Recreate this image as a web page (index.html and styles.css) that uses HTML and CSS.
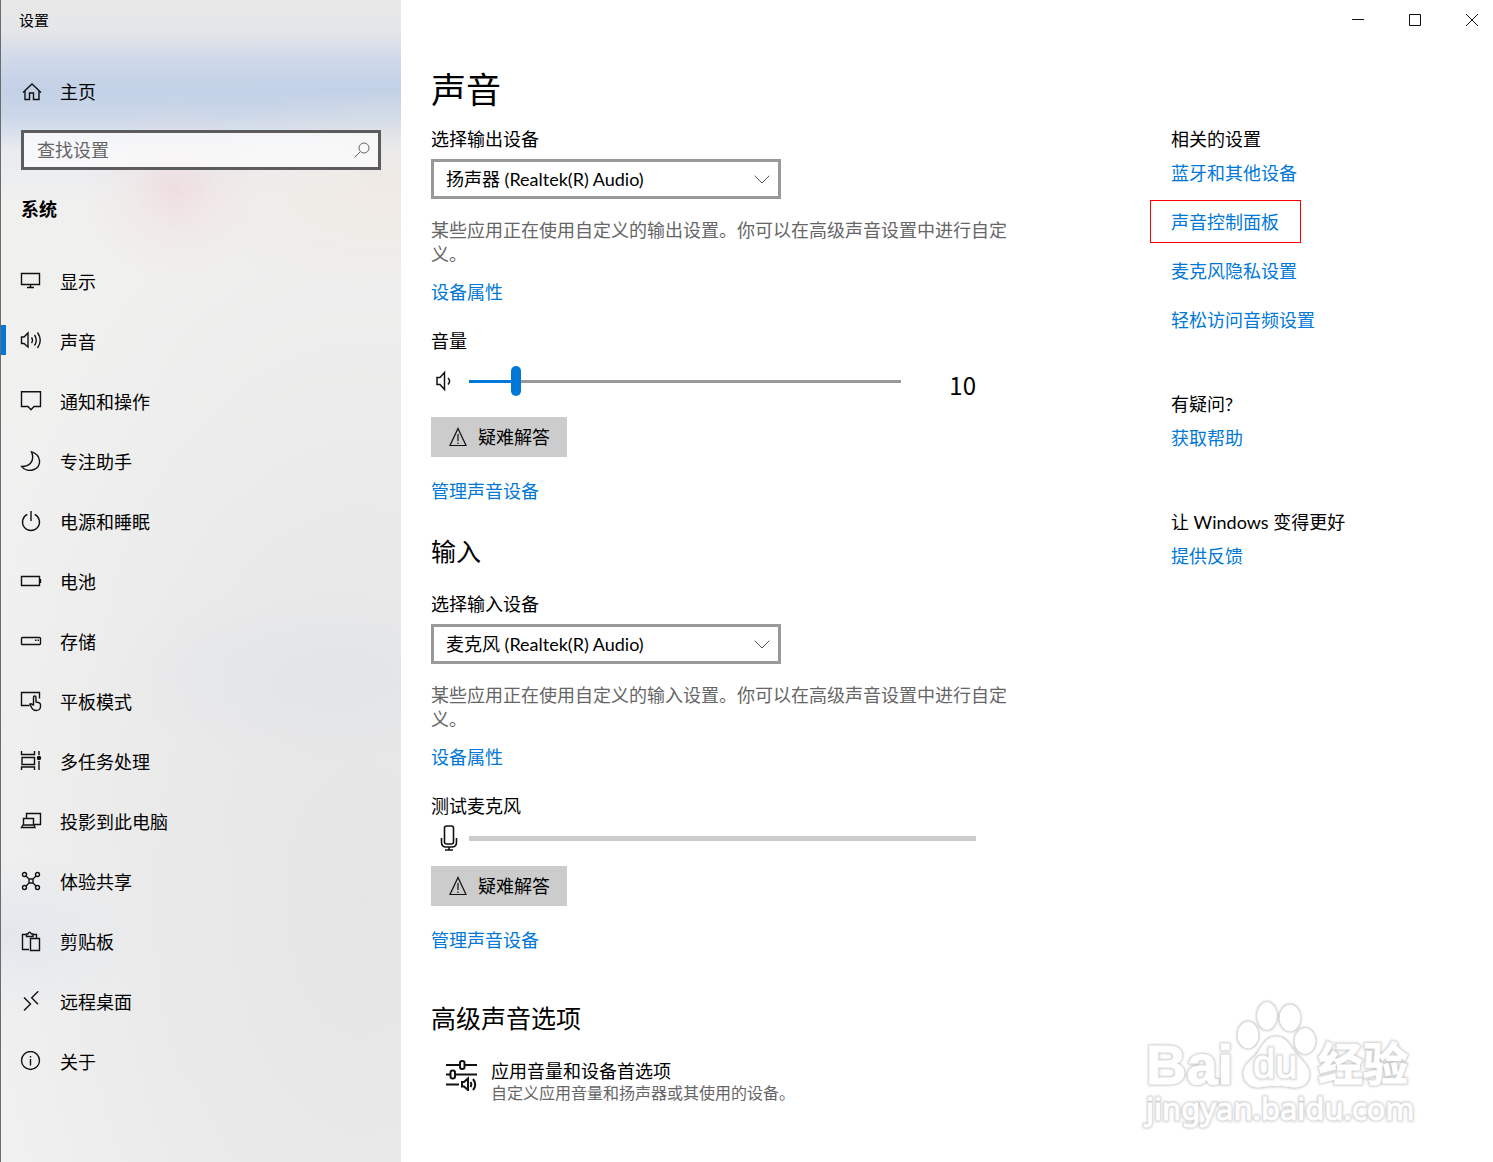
FILE: index.html
```html
<!DOCTYPE html>
<html lang="zh-CN">
<head>
<meta charset="utf-8">
<title>设置</title>
<link rel="stylesheet" href="styles.css">
</head>
<body>
<div class="window">
  <aside class="sidebar">
    <div class="app-name">设置</div>
    <a class="nav-link home" href="#">
      <svg class="icon" viewBox="0 0 22 22"><path d="M3 11.500 12 3l9 8.500M5 10v8.500h4.500v-6.500h4v6.500H19V10"/></svg>
      <span>主页</span>
    </a>
    <label class="search">
      <input type="text" placeholder="查找设置" aria-label="查找设置">
      <svg class="search-icon" viewBox="0 0 16 16"><circle cx="10" cy="6" r="5"/><path d="M6.500 9.500.5 15.500"/></svg>
    </label>
    <h2 class="group-name">系统</h2>
    <nav class="nav">
      <a class="nav-link" href="#"><svg class="icon" viewBox="0 0 22 22"><path d="M1.500 2.500h18v11h-18zM10.500 13.500v2.500M7 16.500h7"/></svg><span>显示</span></a>
      <a class="nav-link active" href="#"><svg class="icon" viewBox="0 0 22 22"><path d="M1.500 6v6.500h2.500l4 3.500V2L4 6zM11.500 6.500q2 2.700 0 5.500M14.500 4q3.600 5.200 0 10.500M17.500 1.500q5.500 7.800 0 15.500"/></svg><span>声音</span></a>
      <a class="nav-link" href="#"><svg class="icon" viewBox="0 0 22 22"><path d="M1.500.8h19v14.700H14l-3 3.200-3-3.200H1.500z"/></svg><span>通知和操作</span></a>
      <a class="nav-link" href="#"><svg class="icon" viewBox="0 0 22 22"><path d="M11.500.8c10 3 10.500 14.500 2.500 17.700-4.500 1.800-9.500.8-12.300-3C8.500 15.500 15.500 11 11.500.8z"/></svg><span>专注助手</span></a>
      <a class="nav-link" href="#"><svg class="icon" viewBox="0 0 22 22"><path d="M11 0v10M7.300 3.400a8.500 8.500 0 1 0 7.400 0"/></svg><span>电源和睡眠</span></a>
      <a class="nav-link" href="#"><svg class="icon" viewBox="0 0 22 22"><path d="M1.500 5.500h18v9h-18z"/><path d="M20.500 8v4"/></svg><span>电池</span></a>
      <a class="nav-link" href="#"><svg class="icon" viewBox="0 0 22 22"><rect x="1.500" y="6.500" width="19" height="7" rx="1"/><path d="M15 9.300h1.500M17.500 9.300H19"/></svg><span>存储</span></a>
      <a class="nav-link" href="#"><svg class="icon" viewBox="0 0 22 22"><path d="M9.500 14.500h-8v-13h18v6M13.500 14.500V6.500q0-1.500 1.200-1.500T16 6.500V11l3 .7q1.500.4 1.500 2V16q-.5 3.500-4.500 3.500-3 0-4.500-3l-1.500-3.500q1.500-.8 3.500 1.500"/></svg><span>平板模式</span></a>
      <a class="nav-link" href="#"><svg class="icon" viewBox="0 0 22 22"><path d="M1.500 0v3.500h13V0M2 6.500h12.500v7H2zM1.500 19v-3h13v3M19 0v4M19 10v9"/><circle class="fill" cx="19" cy="7" r="1.500"/></svg><span>多任务处理</span></a>
      <a class="nav-link" href="#"><svg class="icon" viewBox="0 0 22 22"><path d="M6.500 7.500v-5h14v11h-6M3.500 13.500v-6h10v6M1.500 16.500l1.500-2.500h11l1 2.500z"/></svg><span>投影到此电脑</span></a>
      <a class="nav-link" href="#"><svg class="icon" viewBox="0 0 22 22"><circle cx="4.500" cy="3.500" r="2"/><circle cx="17.500" cy="3.500" r="2"/><circle cx="4.500" cy="16.500" r="2"/><circle cx="17.500" cy="16.500" r="2"/><path d="M9 8h4v4H9zM6 5l3 3M16 5l-3 3M6 15l3-3M16 15l-3-3"/></svg><span>体验共享</span></a>
      <a class="nav-link" href="#"><svg class="icon" viewBox="0 0 22 22"><path d="M9 18.500H2.500v-15h4M13 3.500h3.500v3.500M6.500 5.500v-2.500h1.500q1.500-3.500 3.500 0H13v2.500zM10.500 7.500h9v12h-9z"/></svg><span>剪贴板</span></a>
      <a class="nav-link" href="#"><svg class="icon" viewBox="0 0 22 22"><path d="m4 6.500 6.500 6.500L4 19.500M18.300.3l-6.600 6.400 6.300 6.600"/></svg><span>远程桌面</span></a>
      <a class="nav-link" href="#"><svg class="icon" viewBox="0 0 22 22"><circle cx="10.500" cy="9.500" r="9"/><path d="M10.500 8v6.500M10.500 5v1.500"/></svg><span>关于</span></a>
    </nav>
  </aside>

  <div class="body">
    <div class="titlebar">
      <button type="button" aria-label="最小化"><svg viewBox="0 0 12 12"><path d="M0 5.500h12"/></svg></button>
      <button type="button" aria-label="最大化"><svg viewBox="0 0 12 12"><path d="M.5.5h11v11H.5z"/></svg></button>
      <button type="button" aria-label="关闭"><svg viewBox="0 0 12 12"><path d="m0 0 12 12M12 0 0 12"/></svg></button>
    </div>
    <div class="columns">
      <main class="content">
        <h1>声音</h1>
        <section>
          <label for="output-device">选择输出设备</label>
          <div class="select">
            <select id="output-device"><option>扬声器 (Realtek(R) Audio)</option></select>
            <svg viewBox="0 0 16 9"><path d="m.7.7 7.300 7.300L15.300.7"/></svg>
          </div>
          <p class="note">某些应用正在使用自定义的输出设置。你可以在高级声音设置中进行自定义。</p>
          <a class="link" href="#">设备属性</a>
          <label class="next" for="volume">音量</label>
          <div class="meter-row volume">
            <svg class="speaker" viewBox="0 0 22 22"><path d="M6 7.500v7h3l4.500 5V2.500L9 7.500zM17 8q3.200 3 0 6.500"/></svg>
            <input id="volume" type="range" min="0" max="100" value="10">
            <output for="volume">10</output>
          </div>
          <button class="trouble" type="button">
            <svg viewBox="0 0 18 20"><path d="M9 1.500 17 18.500H1zM9 7v7M9 15.500v1.500"/></svg>疑难解答
          </button>
          <a class="link" href="#">管理声音设备</a>
        </section>
        <section class="input">
          <h2>输入</h2>
          <label for="input-device">选择输入设备</label>
          <div class="select">
            <select id="input-device"><option>麦克风 (Realtek(R) Audio)</option></select>
            <svg viewBox="0 0 16 9"><path d="m.7.7 7.300 7.300L15.300.7"/></svg>
          </div>
          <p class="note">某些应用正在使用自定义的输入设置。你可以在高级声音设置中进行自定义。</p>
          <a class="link" href="#">设备属性</a>
          <div class="next">测试麦克风</div>
          <div class="meter-row mic">
            <svg class="microphone" viewBox="0 0 18 26"><rect x="4.500" y="1" width="9" height="18" rx="2"/><path d="M1.500 13v4q0 5 4.500 5h6q4.500 0 4.500-5v-4M9 22v3M5 25h8"/></svg>
            <div class="level"></div>
          </div>
          <button class="trouble" type="button">
            <svg viewBox="0 0 18 20"><path d="M9 1.500 17 18.500H1zM9 7v7M9 15.500v1.500"/></svg>疑难解答
          </button>
          <a class="link" href="#">管理声音设备</a>
        </section>
        <section class="advanced">
          <h2>高级声音选项</h2>
          <a class="option" href="#">
            <svg viewBox="0 0 32 32"><path d="M0 6h14M19 6h12M0 15.500h4M9.500 15.500H31M0 25.500h13"/><rect x="14" y="2" width="4.500" height="8" rx="2"/><rect x="4.500" y="11.500" width="4.500" height="8" rx="2"/><path d="M16 23v4.500h2l4 3.500V19.500L18 23zM24.500 23q1.600 2.500 0 5M27 20q4.500 5.500 0 11"/></svg>
            <span><span class="option-title">应用音量和设备首选项</span><span class="option-desc">自定义应用音量和扬声器或其使用的设备。</span></span>
          </a>
        </section>
      </main>
      <aside class="related">
        <section>
          <h3>相关的设置</h3>
          <ul>
            <li><a class="link" href="#">蓝牙和其他设备</a></li>
            <li><a class="link marked" href="#">声音控制面板</a></li>
            <li><a class="link" href="#">麦克风隐私设置</a></li>
            <li><a class="link" href="#">轻松访问音频设置</a></li>
          </ul>
        </section>
        <section>
          <h3>有疑问?</h3>
          <a class="link" href="#">获取帮助</a>
        </section>
        <section>
          <h3>让 Windows 变得更好</h3>
          <a class="link" href="#">提供反馈</a>
        </section>
      </aside>
    </div>
  </div>

  <svg class="watermark" viewBox="0 0 280 140">
    <defs><filter id="soft" x="-5%" y="-5%" width="110%" height="110%"><feGaussianBlur stdDeviation="0.8"/></filter>
      <g id="mark">
        <ellipse cx="108" cy="45" rx="10" ry="13"/><ellipse cx="127" cy="26" rx="9.500" ry="13.500"/><ellipse cx="150" cy="28" rx="10" ry="13"/><ellipse cx="165" cy="51" rx="10" ry="12.500"/>
        <path d="M136 47c10 0 13 8 19 16 8 9 14 14 14 21 0 10-8 14-17 13-9-2-23-2-32 0-10 1-17-6-16-15 1-9 8-11 14-19 5-8 9-16 18-16z"/>
        <text class="brand" x="6" y="94">Bai</text>
        <text class="brand-cn" x="178" y="91">经验</text>
        <text class="domain" x="6" y="130">jingyan.baidu.com</text>
      </g>
    </defs>
    <use href="#mark" class="edge" filter="url(#soft)"/>
    <use href="#mark" class="face"/>
    <g class="paw-text"><text class="edge" filter="url(#soft)" x="113" y="88">du</text><text class="face" x="113" y="88">du</text></g>
  </svg>
</div>
</body>
</html>
```
FILE: styles.css
```css
* { box-sizing: border-box; }

body {
  margin: 0;
  background: #fff;
  color: #000;
  font: 18px/24px Lato, "Noto Sans CJK SC", sans-serif;
}

h1, h2, h3, p, ul { margin: 0; padding: 0; font-weight: 400; }
ul { list-style: none; }
a { color: inherit; text-decoration: none; }
button, input, select { font: inherit; color: inherit; }
svg { display: block; fill: none; stroke: #111; flex: none; }

.window {
  position: relative;
  display: grid;
  grid-template-columns: 401px minmax(0, 1fr);
  min-height: 100vh;
}

/* Sidebar */
.sidebar {
  padding-bottom: 70px;
  border-left: 1px solid #6c6c6c;
  background:
    radial-gradient(circle at 174px 190px, rgba(240, 205, 210, .5), rgba(240, 215, 215, .25) 40px, rgba(240, 220, 218, 0) 90px),
    radial-gradient(ellipse 260px 100px at 400px 190px, rgba(240, 232, 224, .7), rgba(240, 234, 228, 0)),
    radial-gradient(ellipse 220px 90px at 320px 675px, rgba(220, 224, 232, .5), rgba(225, 228, 235, 0)),
    radial-gradient(ellipse 130px 80px at 10px 935px, rgba(222, 228, 237, .7), rgba(228, 232, 240, 0)),
    radial-gradient(ellipse 420px 750px at 360px 900px, rgba(227, 227, 227, .85), rgba(229, 229, 229, .6) 50%, rgba(238, 238, 238, 0)),
    linear-gradient(#e9e8e8 0, #e4e6e9 32px, #cdd8e9 62px, #c3d1e7 90px, #ccd8e9 118px, #e8ebf0 150px, #f0f0ef 200px, #f2f2f2 100%);
}

.app-name { padding: 8px 18px; font-size: 15px; }
.nav-link { display: flex; align-items: center; gap: 18px; height: 60px; padding-left: 19px; }
.icon { width: 22px; height: 22px; stroke-width: 1.4; }
.fill { fill: #111; }
.home { margin-top: 22px; }

.search { position: relative; display: block; margin: 8px 20px 0; }
.search input {
  display: block;
  width: 100%;
  height: 40px;
  padding: 0 40px 0 13px;
  border: 3px solid #5c5c5e;
  border-radius: 0;
  outline: 0;
  background: rgba(255, 255, 255, .65);
}
.search input::placeholder { color: #666; opacity: 1; }
.search-icon { position: absolute; right: 11px; top: 12px; width: 16px; height: 16px; stroke: #666; }

.group-name { margin: 27px 20px 31px; font-size: 18px; font-weight: 700; }
.active { position: relative; }
.active::before {
  content: "";
  position: absolute;
  left: 0;
  top: 13px;
  width: 5px;
  height: 30px;
  background: #0078d7;
}

/* Window buttons */
.titlebar { display: flex; justify-content: flex-end; gap: 15px; height: 40px; }
.titlebar button {
  display: grid;
  place-items: center;
  width: 42px;
  padding: 0;
  border: 0;
  background: none;
}
.titlebar svg { width: 12px; height: 12px; }

.columns { display: grid; grid-template-columns: minmax(0, 1fr) 322px; padding-left: 30px; }

/* Main column */
.content { padding: 25px 0 56px; }
.content label { display: block; }
h1 { margin-bottom: 14px; font-size: 35px; line-height: 48px; }
.content h2 { font-size: 25px; line-height: 32px; margin-bottom: 25px; }

.select { position: relative; width: 350px; margin: 8px 0 19px; }
.select select {
  display: block;
  width: 100%;
  height: 40px;
  padding: 0 40px 0 12px;
  border: 3px solid #999;
  border-radius: 0;
  background: #fff;
  appearance: none;
}
.select svg { position: absolute; right: 11px; top: 16px; width: 16px; height: 9px; stroke: #555; pointer-events: none; }

.note { max-width: 580px; margin-bottom: 14px; color: #666; }
.link { color: #0078d7; }
.next { margin-top: 25px; }
.content .link { display: table; }

.meter-row { display: flex; align-items: center; max-width: 545px; height: 30px; }
.volume { margin: 13px 0 21px; }
.mic { margin: 5px 0 13px; }
.speaker { width: 22px; height: 22px; margin-right: 16px; stroke-width: 1.5; }
.microphone { width: 18px; height: 26px; margin: 0 11px 0 9px; stroke-width: 1.6; }
.level { flex: 1; height: 5px; background: #ccc; }
output { align-self: flex-start; margin-left: auto; font: 24px/38px "Noto Sans CJK SC", sans-serif; }

input[type="range"] { width: 432px; height: 30px; margin: 0; appearance: none; background: none; }
input[type="range"]::-webkit-slider-runnable-track {
  height: 3px;
  background: linear-gradient(90deg, #0078d7 47px, #999 47px);
}
input[type="range"]::-webkit-slider-thumb {
  appearance: none;
  width: 10px;
  height: 30px;
  margin-top: -14px;
  border-radius: 5px;
  background: #0078d7;
}

.trouble {
  display: flex;
  align-items: center;
  gap: 11px;
  height: 40px;
  margin-bottom: 22px;
  padding: 0 17px 0 18px;
  border: 0;
  background: #ccc;
}
.trouble svg { width: 18px; height: 20px; stroke-width: 1.2; }

.input { margin-top: 32px; }
.advanced { margin-top: 50px; }
.option { display: flex; align-items: flex-start; gap: 13px; padding-left: 15px; }
.option svg { width: 32px; height: 32px; stroke-width: 2; }
.option-title, .option-desc { display: block; }
.option-desc { color: #666; font-size: 16px; line-height: 20px; }

/* Related settings */
.related { display: flex; flex-direction: column; gap: 60px; padding-top: 87px; }
h3 { margin-bottom: 10px; font-size: 18px; }
.related ul { display: grid; gap: 25px; }
.marked { position: relative; }
.marked::after {
  content: "";
  position: absolute;
  inset: -11px -22px -10px -21px;
  border: 1px solid #f00;
}

/* Watermark */
.watermark { position: absolute; right: 73px; bottom: 32px; width: 280px; height: 140px; pointer-events: none; }
.edge { fill: #c8c8c8; stroke: #c8c8c8; stroke-width: 3; }
.face { fill: #fff; stroke: #fff; stroke-width: 1; }
.brand { font: 700 56px "Liberation Sans", sans-serif; }
.brand-cn { font: 700 45px "Noto Sans CJK SC", sans-serif; }
.domain { font: 400 31px "Noto Sans", sans-serif; }
.paw-text { font: 400 40px "Liberation Sans", sans-serif; }
```
